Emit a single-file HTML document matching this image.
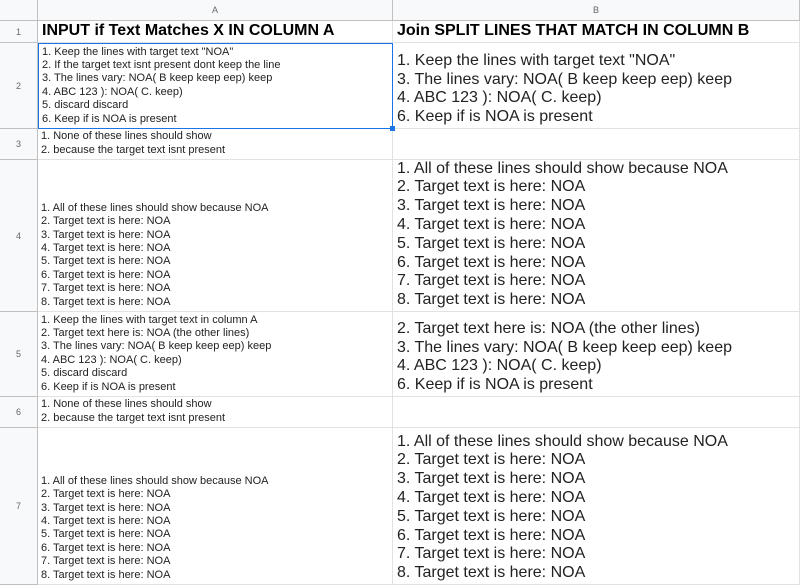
<!DOCTYPE html>
<html><head><style>
body{margin:0;width:800px;height:585px;overflow:hidden;background:#fff;font-family:"Liberation Sans",Arial,sans-serif;position:relative}
.c{position:absolute;box-sizing:border-box;border-right:1px solid #e2e2e2;border-bottom:1px solid #e2e2e2;display:flex;align-items:flex-end;overflow:hidden}
.h{background:#f8f9fa;border-color:#c0c0c0;color:#666;font-size:9px;justify-content:center;align-items:center}
.a{font-size:11px;line-height:13.4px;color:#222;padding:0 0 2px 3px;white-space:pre}
.b{font-size:16px;line-height:18.8px;color:#222;padding:0 0 1px 4px;white-space:pre}
.t{font-weight:bold;font-size:16px;color:#000;padding:0 0 2px 4px;align-items:center}
</style></head><body>
<div class="c h" style="left:0;top:0;width:38px;height:21px"></div>
<div class="c h" style="left:38px;top:0;width:355px;height:21px">A</div>
<div class="c h" style="left:393px;top:0;width:407px;height:21px">B</div>
<div class="c h" style="left:0;top:21px;width:38px;height:22px">1</div>
<div class="c h" style="left:0;top:43px;width:38px;height:86px">2</div>
<div class="c h" style="left:0;top:129px;width:38px;height:31px">3</div>
<div class="c h" style="left:0;top:160px;width:38px;height:152px">4</div>
<div class="c h" style="left:0;top:312px;width:38px;height:85px">5</div>
<div class="c h" style="left:0;top:397px;width:38px;height:31px">6</div>
<div class="c h" style="left:0;top:428px;width:38px;height:157px">7</div>

<div class="c t" style="left:38px;top:21px;width:355px;height:22px">INPUT if Text Matches X IN COLUMN A</div>
<div class="c t" style="left:393px;top:21px;width:407px;height:22px">Join SPLIT LINES THAT MATCH IN COLUMN B</div>

<div class="c a" style="left:38px;top:43px;width:355px;height:86px;border:1px solid #1a73e8">1. Keep the lines with target text "NOA"
2. If the target text isnt present dont keep the line
3. The lines vary: NOA( B keep keep eep) keep
4. ABC 123 ): NOA( C. keep)
5. discard discard
6. Keep if is NOA is present</div>
<div class="c b" style="left:393px;top:43px;width:407px;height:86px">1. Keep the lines with target text "NOA"
3. The lines vary: NOA( B keep keep eep) keep
4. ABC 123 ): NOA( C. keep)
6. Keep if is NOA is present</div>

<div class="c a" style="left:38px;top:129px;width:355px;height:31px">1. None of these lines should show
2. because the target text isnt present</div>
<div class="c b" style="left:393px;top:129px;width:407px;height:31px"></div>

<div class="c a" style="left:38px;top:160px;width:355px;height:152px">1. All of these lines should show because NOA
2. Target text is here: NOA
3. Target text is here: NOA
4. Target text is here: NOA
5. Target text is here: NOA
6. Target text is here: NOA
7. Target text is here: NOA
8. Target text is here: NOA</div>
<div class="c b" style="left:393px;top:160px;width:407px;height:152px">1. All of these lines should show because NOA
2. Target text is here: NOA
3. Target text is here: NOA
4. Target text is here: NOA
5. Target text is here: NOA
6. Target text is here: NOA
7. Target text is here: NOA
8. Target text is here: NOA</div>

<div class="c a" style="left:38px;top:312px;width:355px;height:85px">1. Keep the lines with target text in column A
2. Target text here is: NOA (the other lines)
3. The lines vary: NOA( B keep keep eep) keep
4. ABC 123 ): NOA( C. keep)
5. discard discard
6. Keep if is NOA is present</div>
<div class="c b" style="left:393px;top:312px;width:407px;height:85px">2. Target text here is: NOA (the other lines)
3. The lines vary: NOA( B keep keep eep) keep
4. ABC 123 ): NOA( C. keep)
6. Keep if is NOA is present</div>

<div class="c a" style="left:38px;top:397px;width:355px;height:31px">1. None of these lines should show
2. because the target text isnt present</div>
<div class="c b" style="left:393px;top:397px;width:407px;height:31px"></div>

<div class="c a" style="left:38px;top:428px;width:355px;height:157px">1. All of these lines should show because NOA
2. Target text is here: NOA
3. Target text is here: NOA
4. Target text is here: NOA
5. Target text is here: NOA
6. Target text is here: NOA
7. Target text is here: NOA
8. Target text is here: NOA</div>
<div class="c b" style="left:393px;top:428px;width:407px;height:157px">1. All of these lines should show because NOA
2. Target text is here: NOA
3. Target text is here: NOA
4. Target text is here: NOA
5. Target text is here: NOA
6. Target text is here: NOA
7. Target text is here: NOA
8. Target text is here: NOA</div>
<div style="position:absolute;left:390px;top:126px;width:5px;height:5px;background:#1a73e8"></div>
</body></html>
